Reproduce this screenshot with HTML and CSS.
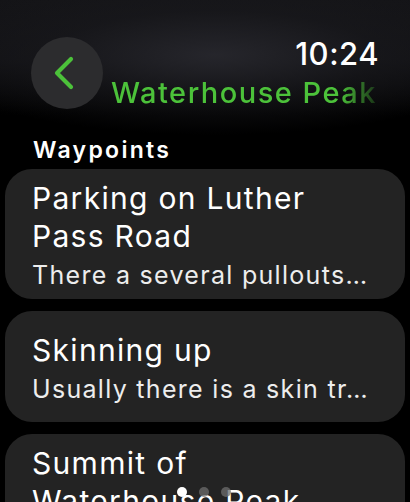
FILE: index.html
```html
<!DOCTYPE html>
<html lang="en">
<head>
<meta charset="utf-8">
<title>Waypoints</title>
<link rel="stylesheet" href="styles.css">
</head>
<body>
<div class="screen">
  <header class="header">
    <button class="back" aria-label="Back">
      <svg width="24" height="34" viewBox="0 0 24 34"><path d="M18 3 L4 17 L18 31" fill="none" stroke="#4cc23a" stroke-width="4.2" stroke-linecap="round" stroke-linejoin="round"/></svg>
    </button>
    <div class="titles">
      <div class="time">10:24</div>
      <div class="title">Waterhouse Peak</div>
    </div>
  </header>
  <h2 class="section">Waypoints</h2>
  <ul class="list">
    <li class="card">
      <div class="card-title">Parking on Luther Pass Road</div>
      <div class="card-sub">There a several pullouts…</div>
    </li>
    <li class="card">
      <div class="card-title">Skinning up</div>
      <div class="card-sub">Usually there is a skin tr…</div>
    </li>
    <li class="card">
      <div class="card-title">Summit of Waterhouse Peak</div>
      <div class="card-sub">Great views of the basin</div>
    </li>
  </ul>
  <div class="dots">
    <span class="dot active"></span><span class="dot"></span><span class="dot"></span>
  </div>
</div>
</body>
</html>
```
FILE: styles.css
```css
html, body {
  margin: 0;
  padding: 0;
  background: #000;
}
body {
  width: 410px;
  height: 502px;
  overflow: hidden;
  font-family: Inter, "Noto Sans", sans-serif;
  color: #fff;
}
.screen {
  position: relative;
  width: 410px;
  height: 502px;
  overflow: hidden;
  background:
    radial-gradient(ellipse 300px 80px at 215px 55px, rgba(40,40,46,0.9) 0%, rgba(25,25,29,0.6) 55%, rgba(0,0,0,0) 100%),
    linear-gradient(#141417 0px, #111114 60px, #000 115px);
}
.header {
  display: flex;
  align-items: flex-start;
  gap: 8px;
  padding: 35px 33px 0 31px;
}
.back {
  flex: none;
  width: 72px;
  height: 72px;
  margin-top: 2px;
  border: 0;
  padding: 0 4px 0 0;
  border-radius: 50%;
  background: #2c2c2e;
  display: flex;
  align-items: center;
  justify-content: center;
}
.titles {
  flex: 1;
  min-width: 0;
  display: flex;
  flex-direction: column;
}
.time {
  text-align: right;
  font-size: 31px;
  line-height: 38px;
  font-weight: 500;
  letter-spacing: 0.5px;
  margin-right: -2px;
}
.title {
  font-size: 29px;
  line-height: 38px;
  font-weight: 500;
  letter-spacing: 1.5px;
  color: #4cc23a;
  white-space: nowrap;
  overflow: hidden;
  margin-top: 1px;
  -webkit-mask-image: linear-gradient(to right, #000 86%, rgba(0,0,0,0.2) 100%);
  mask-image: linear-gradient(to right, #000 86%, rgba(0,0,0,0.2) 100%);
}
.section {
  margin: 24px 0 5px 33px;
  font-size: 23px;
  line-height: 28px;
  font-weight: 600;
  letter-spacing: 2.3px;
}
.list {
  list-style: none;
  margin: 0 5px;
  padding: 0;
  display: flex;
  flex-direction: column;
  gap: 12px;
}
.card {
  background: #232323;
  border-radius: 27px;
  padding: 10px 32px 7px 27px;
  min-height: 94px;
  display: flex;
  flex-direction: column;
  justify-content: center;
}
.card-title {
  font-size: 30px;
  line-height: 38px;
  font-weight: 400;
  letter-spacing: 1.3px;
}
.card-sub {
  margin-top: 3px;
  font-size: 25px;
  line-height: 34px;
  letter-spacing: 1.3px;
  color: #ededed;
  white-space: nowrap;
  overflow: hidden;
}
.dots {
  position: absolute;
  left: 177px;
  top: 487px;
  display: flex;
  gap: 12px;
}
.dot {
  width: 10px;
  height: 10px;
  border-radius: 50%;
  background: rgba(110,110,110,0.75);
}
.dot.active {
  background: #fff;
}
```
